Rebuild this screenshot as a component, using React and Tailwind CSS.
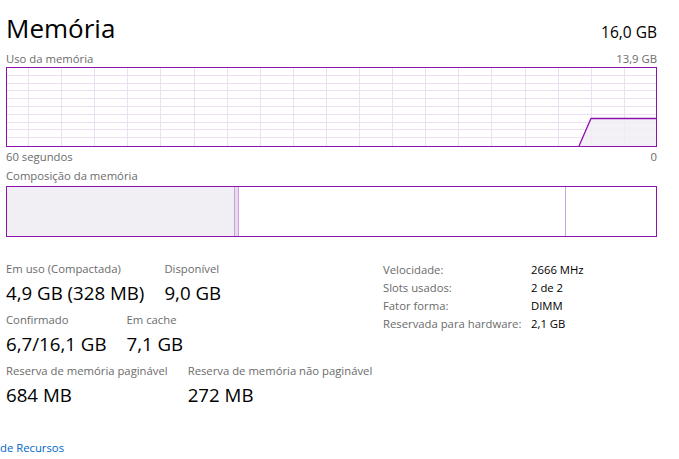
import React from 'react';

const font = { fontFamily: '"Open Sans", "Noto Sans", sans-serif' };

const UsageGraph = () => {
    const w = 649;
    const h = 78;
    const vLines = [];
    for (let x = 21; x < w; x += 33.1) vLines.push(Math.round(x) + 0.5);
    const hLines = [];
    for (let k = 1; k < 10; k++) hLines.push(Math.round(k * 7.8) - 0.5);

    return (
        <svg width={w} height={h} className="block">
            {vLines.map(x => (
                <line key={'v' + x} x1={x} y1={0} x2={x} y2={h} stroke="#eddff1" strokeWidth="1" />
            ))}
            {hLines.map(y => (
                <line key={'h' + y} x1={0} y1={y} x2={w} y2={y} stroke="#eddff1" strokeWidth="1" />
            ))}
            <polygon points={`572,${h} 584,50 ${w},50 ${w},${h}`} fill="#f1eff3" fillOpacity="0.85" />
            <polyline points={`572,${h} 584,50.5 ${w},50.5`} fill="none" stroke="#8b12ae" strokeWidth="1.3" />
        </svg>
    );
};

const Stat = ({ label, value }) => (
    <div className="flex flex-col whitespace-nowrap">
        <span className="text-[11.3px] leading-[16px] text-[#6b6b6b]">{label}</span>
        <span className="mt-[4px] text-[18.7px] leading-[24px] text-black">{value}</span>
    </div>
);

const specs = [
    ['Velocidade:', '2666 MHz'],
    ['Slots usados:', '2 de 2'],
    ['Fator forma:', 'DIMM'],
    ['Reservada para hardware:', '2,1 GB'],
];

const App = () => {
    return (
        <div className="w-[679px] h-[459px] overflow-hidden bg-white" style={font}>
            <div className="px-[6px] w-[663px]">
                <div className="mt-[14px] flex items-baseline justify-between h-[28px]">
                    <h1 className="text-[26px] leading-[28px] text-black">Memória</h1>
                    <span className="text-[15.5px] leading-[28px] text-black">16,0 GB</span>
                </div>

                <div className="mt-[9px] flex justify-between text-[11.3px] leading-[16px] text-[#6b6b6b]">
                    <span>Uso da memória</span>
                    <span>13,9 GB</span>
                </div>
                <div className="w-[651px] h-[80px] border border-[#8b12ae]">
                    <UsageGraph />
                </div>
                <div className="mt-[2px] flex justify-between text-[11.3px] leading-[16px] text-[#6b6b6b]">
                    <span>60 segundos</span>
                    <span>0</span>
                </div>

                <div className="mt-[3px] text-[11.3px] leading-[16px] text-[#6b6b6b]">Composição da memória</div>
                <div className="mt-[2px] w-[651px] h-[51px] border border-[#8b12ae] flex">
                    <div className="w-[227px] bg-[#f2eff4]" />
                    <div className="w-[5px] bg-[#ead9f0] border-x border-[#c9a3d8]" />
                    <div className="w-[326px]" />
                    <div className="w-px bg-[#c9a3d8]" />
                    <div className="flex-1" />
                </div>

                <div className="mt-[24px] flex items-start">
                    <div className="w-[377px] flex flex-col gap-[7px]">
                        <div className="flex gap-5">
                            <Stat label="Em uso (Compactada)" value="4,9 GB (328 MB)" />
                            <Stat label="Disponível" value="9,0 GB" />
                        </div>
                        <div className="flex gap-5">
                            <Stat label="Confirmado" value="6,7/16,1 GB" />
                            <Stat label="Em cache" value="7,1 GB" />
                        </div>
                        <div className="flex gap-5">
                            <Stat label="Reserva de memória paginável" value="684 MB" />
                            <Stat label="Reserva de memória não paginável" value="272 MB" />
                        </div>
                    </div>
                    <div className="grid grid-cols-[148px_auto] content-start text-[11.3px] leading-[18px] whitespace-nowrap">
                        {specs.map(([k, v]) => (
                            <React.Fragment key={k}>
                                <span className="text-[#6b6b6b]">{k}</span>
                                <span className="text-black">{v}</span>
                            </React.Fragment>
                        ))}
                    </div>
                </div>
            </div>

            <div className="mt-[33px] text-[11.3px] leading-[16px] text-[#0066cc]">de Recursos</div>
        </div>
    );
};

export default App;
